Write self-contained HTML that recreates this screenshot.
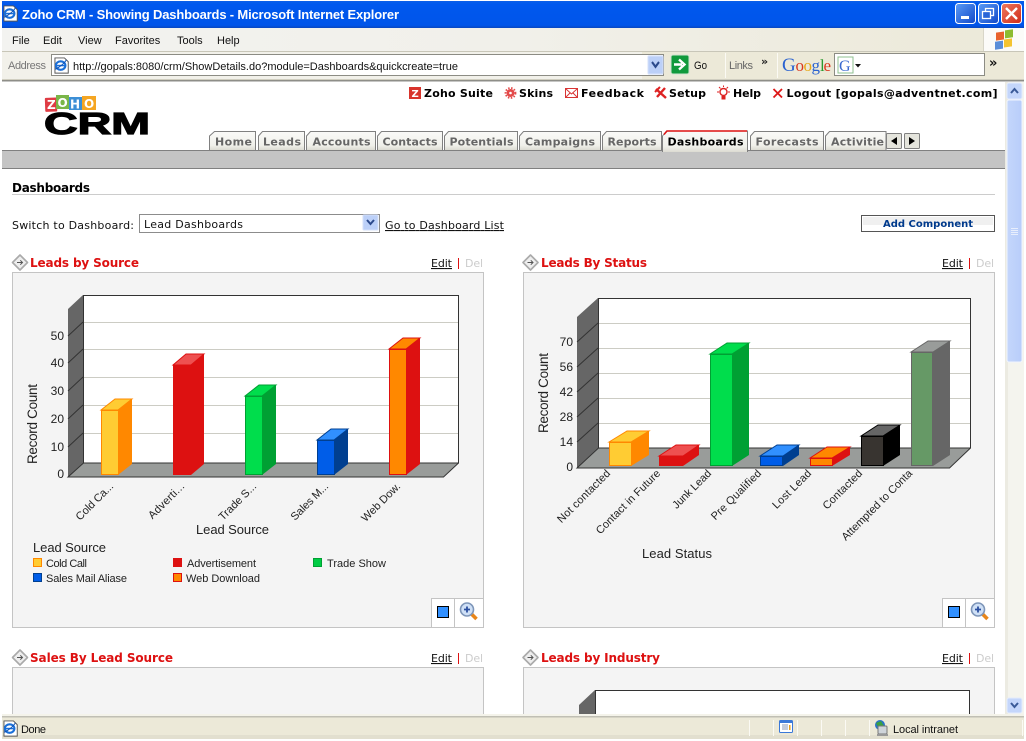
<!DOCTYPE html>
<html><head><meta charset="utf-8"><title>Zoho CRM - Showing Dashboards</title>
<style>
html,body{margin:0;padding:0;background:#fff;overflow:hidden}
svg{display:block}
text{white-space:pre}
.ui{font-family:"Liberation Sans",sans-serif;font-size:11px;fill:#111}
.v{font-family:"DejaVu Sans",sans-serif;font-size:11px;fill:#111}
.b{font-family:"DejaVu Sans",sans-serif;font-size:11px;font-weight:bold;fill:#000}
.tab{font-family:"DejaVu Sans",sans-serif;font-size:11px;font-weight:bold;fill:#666}
.hd{font-family:"DejaVu Sans",sans-serif;font-size:12px;font-weight:bold;fill:#dd1111}
.c{font-family:"Liberation Sans",sans-serif;font-size:11px;fill:#222}
.t{fill:url(#tabg);stroke:#808080;stroke-width:1}
.wall{fill:#666}.floor{fill:#999c9a}
.g{stroke:#ccccc4;stroke-width:1;fill:none}
.w{stroke:#333;stroke-width:1;fill:none}
</style></head><body>
<svg width="1026" height="741" viewBox="0 0 1026 741" xmlns="http://www.w3.org/2000/svg">
<defs>
<linearGradient id="title" x1="0" y1="0" x2="0" y2="1"><stop offset="0" stop-color="#0a5fe8"/><stop offset=".12" stop-color="#0058ee"/><stop offset=".9" stop-color="#0055ea"/><stop offset="1" stop-color="#0a48c0"/></linearGradient>
<linearGradient id="menu" x1="0" y1="0" x2="1" y2="0"><stop offset="0" stop-color="#f3f3f0"/><stop offset=".5" stop-color="#f1f0ea"/><stop offset="1" stop-color="#ece9d8"/></linearGradient>
<linearGradient id="tabg" x1="0" y1="0" x2="0" y2="1"><stop offset="0" stop-color="#fafaf8"/><stop offset=".75" stop-color="#f0f0ea"/><stop offset="1" stop-color="#dcdbd2"/></linearGradient>
<linearGradient id="btnb" x1="0" y1="0" x2="1" y2="1"><stop offset="0" stop-color="#5c9cf6"/><stop offset="1" stop-color="#1148c8"/></linearGradient>
<linearGradient id="btnr" x1="0" y1="0" x2="1" y2="1"><stop offset="0" stop-color="#ee7a60"/><stop offset="1" stop-color="#d02a18"/></linearGradient>
<linearGradient id="sb" x1="0" y1="0" x2="1" y2="0"><stop offset="0" stop-color="#c4d6fb"/><stop offset="1" stop-color="#b8cdfa"/></linearGradient>
<g id="ie"><path d="M1 1H11L15 5V17H1Z" fill="#fff" stroke="#555"/><ellipse cx="7" cy="9" rx="5" ry="4.5" fill="none" stroke="#1a6fd8" stroke-width="2.2"/><path d="M3 9H11" stroke="#1a6fd8" stroke-width="1.6"/><path d="M1 13C4 12 11 7 13 3" fill="none" stroke="#0b4fb4" stroke-width="1"/></g>
<g id="arrow"><path d="M0 0L7.5-7.5L15 0L7.5 7.5Z" fill="#eee" stroke="#aaa" stroke-width="1.6" stroke-linejoin="round"/><path d="M4.5 0H10M7.8-2.2L10 0L7.8 2.2" fill="none" stroke="#555" stroke-width="1"/></g>
<g id="mag"><path d="M4.500 4.500L9.500 9.500" stroke="#e8861a" stroke-width="3.600"/><circle cx="0" cy="0" r="6.5" fill="#cfe0f6" stroke="#7d95b8" stroke-width="1.6"/><path d="M-3 0H3M0-3V3" stroke="#2b4fa0" stroke-width="1.8"/></g>
<g id="dd"><rect x="0" y="0" width="15" height="15" rx="1" fill="#bcd0f8" stroke="#d4e0fa"/><path d="M4 5L7.500 9L11 5" fill="none" stroke="#2c4a8c" stroke-width="2"/></g>
</defs>

<rect width="1026" height="741" fill="#fff"/>

<!-- title bar -->
<rect x="2" y="1" width="1022" height="27" fill="url(#title)"/>
<use href="#ie" transform="translate(3,5) scale(.95)"/>
<text x="22" y="19" textLength="377" font-family="Liberation Sans,sans-serif" font-size="13" font-weight="bold" fill="#fff">Zoho CRM - Showing Dashboards - Microsoft Internet Explorer</text>
<rect x="955.500" y="3.500" width="20" height="20" rx="3" fill="url(#btnb)" stroke="#fff"/>
<rect x="961" y="16" width="8" height="3" fill="#fff"/>
<rect x="978.500" y="3.500" width="20" height="20" rx="3" fill="url(#btnb)" stroke="#fff"/>
<rect x="985.500" y="8.500" width="8" height="7" fill="none" stroke="#fff" stroke-width="1.300"/><rect x="982.500" y="11.500" width="8" height="7" fill="#2a66d8" stroke="#fff" stroke-width="1.300"/>
<rect x="1001.500" y="3.500" width="20" height="20" rx="3" fill="url(#btnr)" stroke="#fff"/>
<path d="M1006 8L1017 19M1017 8L1006 19" stroke="#fff" stroke-width="2.400"/>

<!-- menu bar -->
<rect x="2" y="28" width="1022" height="24" fill="url(#menu)"/>
<rect x="984" y="28" width="40" height="24" fill="#fbfbf8"/>
<rect x="983" y="28" width="1" height="24" fill="#d8d6c8"/>
<rect x="2" y="51" width="1022" height="1" fill="#c8c6b8"/>
<g class="ui"><text class="ui" x="12" y="44">File</text><text class="ui" x="43" y="44">Edit</text><text class="ui" x="78" y="44">View</text><text class="ui" x="115" y="44">Favorites</text><text class="ui" x="177" y="44">Tools</text><text class="ui" x="217" y="44">Help</text></g>
<g transform="translate(993,31) skewY(-8)"><rect x="3" y="2" width="8" height="8" fill="#e8622c"/><rect x="12" y="1" width="8" height="8" fill="#8cbc30"/><rect x="2" y="11" width="8" height="8" fill="#5a8ed8"/><rect x="11" y="10" width="8" height="8" fill="#f4c430"/></g>

<!-- address bar -->
<rect x="2" y="52" width="1022" height="27" fill="#ece9d8"/>
<rect x="2" y="52" width="640" height="27" fill="#f2f1ea"/>
<text class="ui" x="8" y="69" style="fill:#777" textLength="38">Address</text>
<rect x="51.500" y="54.500" width="612" height="21" fill="#fff" stroke="#8c8c84"/>
<use href="#ie" transform="translate(54,57) scale(.95)"/>
<text class="ui" x="73" y="70" textLength="385">http://gopals:8080/crm/ShowDetails.do?module=Dashboards&amp;quickcreate=true</text>
<use href="#dd" transform="translate(648,56) scale(1,1.2)"/>
<rect x="671" y="55" width="18" height="19" rx="2" fill="#119a3c" stroke="#cfe4cf"/>
<path d="M674 64.500H682M679 59.500L684.500 64.500L679 69.500" fill="none" stroke="#fff" stroke-width="2.400"/>
<text class="ui" x="694" y="69" textLength="13" lengthAdjust="spacingAndGlyphs">Go</text>
<rect x="725" y="53" width="1" height="25" fill="#fbfaf4"/>
<text class="ui" x="729" y="69" textLength="24" style="fill:#666">Links</text>
<text x="761" y="65" font-family="DejaVu Sans,sans-serif" font-size="11" font-weight="bold" fill="#222">»</text>
<rect x="777" y="53" width="1" height="25" fill="#fbfaf4"/>
<g font-family="Liberation Serif,serif" font-size="17"><text x="782" y="71" fill="#2a62d0" font-size="19">G</text><text x="795.500" y="71" fill="#d93a20">o</text><text x="803.500" y="71" fill="#e8a818">o</text><text x="811.500" y="71" fill="#2a62d0">g</text><text x="820" y="71" fill="#2a9a30">l</text><text x="823.500" y="71" fill="#d93a20">e</text></g>
<rect x="834.500" y="53.500" width="150" height="22" fill="#fff" stroke="#8c8c84"/>
<rect x="838" y="57" width="15" height="16" fill="#fff" stroke="#8fc08f"/>
<text x="839" y="71" font-family="Liberation Serif,serif" font-size="16" fill="#3a6ad0">G</text>
<path d="M855 64H861L858 67.500Z" fill="#111"/>
<text x="989" y="67" font-family="DejaVu Sans,sans-serif" font-size="13" font-weight="bold" fill="#111">»</text>
<rect x="2" y="79" width="1022" height="1" fill="#d0cec0"/>
<rect x="2" y="80" width="1022" height="1.500" fill="#8e8e88"/>

<!-- logo -->
<g transform="rotate(-2 70 103)"><rect x="45" y="97" width="12" height="14" rx="1" fill="#df3c44"/></g>
<rect x="56" y="95" width="13" height="14" fill="#7ab648"/>
<rect x="69" y="97" width="13" height="13" fill="#3c8fd6"/>
<rect x="82" y="96" width="14" height="14" fill="#f5a623"/>
<g font-family="DejaVu Sans,sans-serif" font-size="12" font-weight="bold" fill="#fff"><text x="47" y="109">Z</text><text x="57.500" y="107">O</text><text x="70" y="108.500">H</text><text x="84" y="108">O</text></g>
<text x="44" y="134" textLength="106" lengthAdjust="spacingAndGlyphs" font-family="Liberation Sans,sans-serif" font-size="31" font-weight="bold" fill="#000" stroke="#000" stroke-width="1.200">CRM</text>

<!-- top links -->
<rect x="409" y="87" width="12" height="12" fill="#d8342c"/><text x="411.500" y="97" font-family="DejaVu Sans,sans-serif" font-size="10" font-weight="bold" fill="#fff">Z</text>
<text class="b" x="424" y="97" textLength="69">Zoho Suite</text>
<circle cx="510.500" cy="93" r="4" fill="#e34a4a"/><circle cx="510.500" cy="93" r="5" fill="none" stroke="#e34a4a" stroke-width="1.800" stroke-dasharray="1.500 1.500"/><circle cx="510.500" cy="93" r="1.300" fill="#fff"/>
<text class="b" x="519" y="97" textLength="34">Skins</text>
<rect x="565.500" y="88.500" width="12" height="9" fill="#fff" stroke="#d83434"/><path d="M566 89L571.500 94L577 89M566 97L570 93M577 97L573 93" fill="none" stroke="#d83434"/>
<text class="b" x="581" y="97" textLength="63">Feedback</text>
<path d="M656 89L666 98M665 88L657 97" stroke="#dd2222" stroke-width="2.400"/><path d="M655 92L660 87" stroke="#dd2222" stroke-width="2"/>
<text class="b" x="669" y="97" textLength="37">Setup</text>
<circle cx="723.500" cy="92" r="3.500" fill="#fff" stroke="#dd2222" stroke-width="1.400"/><path d="M722 96.500H725V99H722ZM717 92H719M728 92H730M719 87L720.500 88.500M728 87L726.500 88.500M723.500 85.500V87" fill="#dd2222" stroke="#dd2222"/>
<text class="b" x="733" y="97" textLength="28">Help</text>
<path d="M773.500 89L782 97.500M782 89L773.500 97.500" stroke="#dd1818" stroke-width="1.800"/>
<text class="b" x="786.500" y="97" textLength="211">Logout [gopals@adventnet.com]</text>

<!-- band -->
<rect x="2" y="150" width="1003" height="1" fill="#808080"/>
<rect x="2" y="151" width="1003" height="17" fill="#c4c4c4"/>
<rect x="2" y="168" width="1003" height="1" fill="#808080"/>

<!-- tabs -->
<path class="t" d="M209.500 150V136L214.500 131.500H255.500V150"/>
<path class="t" d="M258.500 150V136L262.500 131.500H304.500V150"/>
<path class="t" d="M306.500 150V136L310.500 131.500H375.500V150"/>
<path class="t" d="M377.500 150V136L381.500 131.500H442.500V150"/>
<path class="t" d="M444.500 150V136L448.500 131.500H517.500V150"/>
<path class="t" d="M519.500 150V136L523.500 131.500H600.500V150"/>
<path class="t" d="M602.500 150V136L606.500 131.500H661.500V150"/>
<path class="t" d="M750.500 150V136L754.500 131.500H823.500V150"/>
<path class="t" d="M825.500 150V136L829.500 131.500H886V150"/>
<path d="M662.500 152V136L666.500 131H747.500V152" fill="url(#tabg)" stroke="#808080"/>
<path d="M664 134.500L667 131H747" fill="none" stroke="#dd1111" stroke-width="1.500"/>
<text class="tab" x="215" y="145.500" textLength="37">Home</text>
<text class="tab" x="263" y="145.500" textLength="38">Leads</text>
<text class="tab" x="312.500" y="145.500" textLength="58">Accounts</text>
<text class="tab" x="382.500" y="145.500" textLength="55">Contacts</text>
<text class="tab" x="449.500" y="145.500" textLength="64">Potentials</text>
<text class="tab" x="525" y="145.500" textLength="70">Campaigns</text>
<text class="tab" x="607.500" y="145.500" textLength="49">Reports</text>
<text class="b" x="667.500" y="145.500" textLength="76">Dashboards</text>
<text class="tab" x="755.500" y="145.500" textLength="63">Forecasts</text>
<text class="tab" x="831" y="145.500" textLength="53">Activitie</text>
<rect x="886.500" y="133.500" width="15" height="15" rx="1" fill="#e4e4dc" stroke="#808080"/><path d="M897 137V145L891 141Z" fill="#000"/>
<rect x="904.500" y="133.500" width="15" height="15" rx="1" fill="#e4e4dc" stroke="#808080"/><path d="M909 137V145L915 141Z" fill="#000"/>

<!-- heading -->
<text class="b" x="12" y="192" textLength="78" style="font-size:12px">Dashboards</text>
<rect x="12" y="194" width="983" height="1" fill="#ccc"/>
<text class="v" x="12" y="229" textLength="122">Switch to Dashboard:</text>
<rect x="139.500" y="214.500" width="240" height="18" fill="#fff" stroke="#8c8c8c"/>
<text class="v" x="144" y="228" textLength="99">Lead Dashboards</text>
<use href="#dd" transform="translate(363,215)"/>
<text class="v" x="385" y="229" textLength="119" text-decoration="underline">Go to Dashboard List</text>
<rect x="861.500" y="215.500" width="133" height="16" fill="#fff" stroke="#555"/>
<rect x="863" y="217" width="130" height="8" fill="#f0f0f0"/>
<text x="883" y="227" textLength="90" font-family="DejaVu Sans,sans-serif" font-size="10" font-weight="bold" fill="#003a8c">Add Component</text>

<!-- Left panel heading -->
<use href="#arrow" transform="translate(12.500,262.500)"/>
<text class="hd" x="30" y="267" textLength="109">Leads by Source</text>
<text class="v" x="431" y="267" textLength="21" text-decoration="underline">Edit</text>
<rect x="458" y="258" width="1" height="11" fill="#dd1111"/>
<text class="v" x="465" y="267" textLength="18" style="fill:#ccc">Del</text>
<rect x="12.500" y="272.500" width="471" height="355" fill="#f4f4f4" stroke="#c4c4c4"/>

<!-- chart 1 -->
<rect x="83" y="295" width="375" height="168" fill="#fff"/>
<path d="M83 295L68 309V477L83 463Z" class="wall"/>
<path d="M83 463H458L443 477H68Z" class="floor"/>
<path class="g" d="M83 322.500H458M83 349.500H458M83 377.500H458M83 405.500H458M83 433.500H458"/>
<path d="M68 336L83 322M68 363L83 349M68 391L83 377M68 419L83 405M68 447L83 433" stroke="#333" fill="none"/>
<path class="w" d="M83.500 463V295.500H458.500V463H83.500M458.500 463L443.500 477H68L83.500 463"/>
<g class="c"><text class="c" x="64" y="340" text-anchor="end" style="font-size:12px">50</text><text class="c" x="64" y="367" text-anchor="end" style="font-size:12px">40</text><text class="c" x="64" y="395" text-anchor="end" style="font-size:12px">30</text><text class="c" x="64" y="423" text-anchor="end" style="font-size:12px">20</text><text class="c" x="64" y="451" text-anchor="end" style="font-size:12px">10</text><text class="c" x="64" y="478" text-anchor="end" style="font-size:12px">0</text></g>
<text class="c" transform="translate(37,464) rotate(-90)" textLength="80" style="font-size:13.500px">Record Count</text>

<!-- bars 1 -->
<g stroke-width="1">
<path d="M118 410L132 399V464L118 475Z" fill="#ff8800"/><path d="M101 410L115 399H132L118 410Z" fill="#ffcc33" stroke="#ff8800"/><rect x="101.500" y="410.500" width="17" height="64" fill="#ffcc33" stroke="#ff8800"/>
<path d="M191 365L204 354V464L191 475Z" fill="#dd1111"/><path d="M173 365L186 354H204L191 365Z" fill="#ee5050" stroke="#dd1111"/><rect x="173.500" y="365.500" width="17" height="109" fill="#dd1111" stroke="#dd1111"/>
<path d="M262 396L276 385V464L262 475Z" fill="#00a033"/><path d="M245 396L259 385H276L262 396Z" fill="#00dd4c" stroke="#00a033"/><rect x="245.500" y="396.500" width="17" height="78" fill="#00dd4c" stroke="#00a033"/>
<path d="M334 440L348 429V464L334 475Z" fill="#003f90"/><path d="M317 440L331 429H348L334 440Z" fill="#3190ff" stroke="#003f90"/><rect x="317.500" y="440.500" width="17" height="34" fill="#005de8" stroke="#003f90"/>
<path d="M406 349L420 338V464L406 475Z" fill="#dd1111"/><path d="M389 349L403 338H420L406 349Z" fill="#ff8800" stroke="#dd1111"/><rect x="389.500" y="349.500" width="17" height="125" fill="#ff8800" stroke="#dd1111"/>
</g>
<g class="c">
<text class="c" text-anchor="end" transform="translate(114,487) rotate(-45)" textLength="48">Cold Ca...</text>
<text class="c" text-anchor="end" transform="translate(185,487) rotate(-45)" textLength="46">Adverti...</text>
<text class="c" text-anchor="end" transform="translate(257,487) rotate(-45)" textLength="48">Trade S...</text>
<text class="c" text-anchor="end" transform="translate(329,487) rotate(-45)" textLength="48">Sales M...</text>
<text class="c" text-anchor="end" transform="translate(401,487) rotate(-45)" textLength="50">Web Dow.</text>
</g>
<text class="c" x="196" y="534" textLength="73" style="font-size:13px">Lead Source</text>
<text class="c" x="33" y="552" textLength="73" style="font-size:13px">Lead Source</text>
<rect x="33.500" y="558.500" width="8" height="8" fill="#ffcc33" stroke="#ff8800"/><text class="c" x="46" y="567" textLength="41">Cold Call</text>
<rect x="173.500" y="558.500" width="8" height="8" fill="#dd1111" stroke="#dd1111"/><text class="c" x="187" y="567" textLength="69">Advertisement</text>
<rect x="313.500" y="558.500" width="8" height="8" fill="#00cc44" stroke="#00a033"/><text class="c" x="327" y="567" textLength="59">Trade Show</text>
<rect x="33.500" y="573.500" width="8" height="8" fill="#005de8" stroke="#003f90"/><text class="c" x="46" y="582" textLength="81">Sales Mail Aliase</text>
<rect x="173.500" y="573.500" width="8" height="8" fill="#ff8800" stroke="#dd1111"/><text class="c" x="186" y="582" textLength="74">Web Download</text>
<rect x="431.500" y="598.500" width="52" height="29" fill="#fff" stroke="#c4c4c4"/><rect x="454" y="598.500" width="1" height="29" fill="#c4c4c4"/>
<rect x="437.500" y="606.500" width="11" height="11" fill="#3190ff" stroke="#000"/>
<use href="#mag" transform="translate(467,609.500)"/>

<!-- Right panel heading -->
<use href="#arrow" transform="translate(523,262.500)"/>
<text class="hd" x="541" y="267" textLength="106">Leads By Status</text>
<text class="v" x="942" y="267" textLength="21" text-decoration="underline">Edit</text>
<rect x="969" y="258" width="1" height="11" fill="#dd1111"/>
<text class="v" x="976" y="267" textLength="18" style="fill:#ccc">Del</text>
<rect x="523.500" y="272.500" width="471" height="355" fill="#f4f4f4" stroke="#c4c4c4"/>

<!-- chart 2 -->
<rect x="598" y="298" width="372" height="150" fill="#fff"/>
<path d="M598 298L577 317V468L598 448Z" class="wall"/>
<path d="M598 448H970L949 468H577Z" class="floor"/>
<path class="g" d="M598 323.500H970M598 348.500H970M598 373.500H970M598 398.500H970M598 423.500H970"/>
<path d="M577 342L598 323M577 367L598 348M577 392L598 373M577 417L598 398M577 442L598 423" stroke="#333" fill="none"/>
<path class="w" d="M598.500 448V298.500H970.500V448H598.500M970.500 448L949.500 468H577L598.500 448"/>
<g class="c"><text class="c" x="573" y="346" text-anchor="end" style="font-size:12px">70</text><text class="c" x="573" y="371" text-anchor="end" style="font-size:12px">56</text><text class="c" x="573" y="396" text-anchor="end" style="font-size:12px">42</text><text class="c" x="573" y="421" text-anchor="end" style="font-size:12px">28</text><text class="c" x="573" y="446" text-anchor="end" style="font-size:12px">14</text><text class="c" x="573" y="471" text-anchor="end" style="font-size:12px">0</text></g>
<text class="c" transform="translate(548,433) rotate(-90)" textLength="80" style="font-size:13.500px">Record Count</text>

<!-- bars 2 -->
<g stroke-width="1">
<path d="M631 442L649 431V455L631 466Z" fill="#ff8800"/><path d="M609 442L627 431H649L631 442Z" fill="#ffcc33" stroke="#ff8800"/><rect x="609.500" y="442.500" width="22" height="23" fill="#ffcc33" stroke="#ff8800"/>
<path d="M683 456L699 445V455L683 466Z" fill="#dd1111"/><path d="M659 456L676 445H699L683 456Z" fill="#ee5050" stroke="#dd1111"/><rect x="659.500" y="456.500" width="23" height="9" fill="#dd1111" stroke="#dd1111"/>
<path d="M732 354L749 343V455L732 466Z" fill="#00a033"/><path d="M710 354L727 343H749L732 354Z" fill="#00dd4c" stroke="#00a033"/><rect x="710.500" y="354.500" width="22" height="111" fill="#00dd4c" stroke="#00a033"/>
<path d="M783 456L799 445V455L783 466Z" fill="#003f90"/><path d="M760 456L777 445H799L783 456Z" fill="#3190ff" stroke="#003f90"/><rect x="760.500" y="456.500" width="22" height="9" fill="#005de8" stroke="#003f90"/>
<path d="M832 458L850 447V455L832 466Z" fill="#dd1111"/><path d="M810 458L827 447H850L832 458Z" fill="#ff8800" stroke="#dd1111"/><rect x="810.500" y="458.500" width="22" height="7" fill="#ff8800" stroke="#dd1111"/>
<path d="M883 436L900 425V455L883 466Z" fill="#000"/><path d="M861 436L878 425H900L883 436Z" fill="#666" stroke="#000"/><rect x="861.500" y="436.500" width="22" height="29" fill="#383430" stroke="#000"/>
<path d="M933 352L950 341V455L933 466Z" fill="#666"/><path d="M911 352L928 341H950L933 352Z" fill="#999c9a" stroke="#666"/><rect x="911.500" y="352.500" width="21" height="113" fill="#669966" stroke="#666"/>
</g>
<g class="c">
<text class="c" text-anchor="end" transform="translate(611,474) rotate(-45)" textLength="70">Not contacted</text>
<text class="c" text-anchor="end" transform="translate(661,474) rotate(-45)" textLength="86">Contact in Future</text>
<text class="c" text-anchor="end" transform="translate(712,474) rotate(-45)" textLength="50">Junk Lead</text>
<text class="c" text-anchor="end" transform="translate(762,474) rotate(-45)" textLength="66">Pre Qualified</text>
<text class="c" text-anchor="end" transform="translate(812,474) rotate(-45)" textLength="50">Lost Lead</text>
<text class="c" text-anchor="end" transform="translate(863,474) rotate(-45)" textLength="51">Contacted</text>
<text class="c" text-anchor="end" transform="translate(913,474) rotate(-45)" textLength="95">Attempted to Conta</text>
</g>
<text class="c" x="642" y="558" textLength="70" style="font-size:13px">Lead Status</text>
<rect x="942.500" y="598.500" width="52" height="29" fill="#fff" stroke="#c4c4c4"/><rect x="965" y="598.500" width="1" height="29" fill="#c4c4c4"/>
<rect x="948.500" y="606.500" width="11" height="11" fill="#3190ff" stroke="#000"/>
<use href="#mag" transform="translate(978,609.500)"/>

<!-- lower headings -->
<use href="#arrow" transform="translate(12.500,657.500)"/>
<text class="hd" x="30" y="662" textLength="143">Sales By Lead Source</text>
<text class="v" x="431" y="662" textLength="21" text-decoration="underline">Edit</text>
<rect x="458" y="653" width="1" height="11" fill="#dd1111"/>
<text class="v" x="465" y="662" textLength="18" style="fill:#ccc">Del</text>
<rect x="12.500" y="667.500" width="471" height="60" fill="#f4f4f4" stroke="#c4c4c4"/>
<use href="#arrow" transform="translate(523,657.500)"/>
<text class="hd" x="541" y="662" textLength="119">Leads by Industry</text>
<text class="v" x="942" y="662" textLength="21" text-decoration="underline">Edit</text>
<rect x="969" y="653" width="1" height="11" fill="#dd1111"/>
<text class="v" x="976" y="662" textLength="18" style="fill:#ccc">Del</text>
<rect x="523.500" y="667.500" width="471" height="60" fill="#f4f4f4" stroke="#c4c4c4"/>
<rect x="595" y="690" width="375" height="40" fill="#fff"/>
<path d="M595 690L579 705V730H595Z" class="wall"/>
<path d="M595.500 730V690.500H969.500V730" class="w"/>

<!-- scrollbar -->
<rect x="1005" y="82" width="19" height="634" fill="#f4f4ee"/>
<rect x="1005" y="82" width="3" height="634" fill="#ecebe2"/>
<rect x="1007" y="83" width="15" height="16" rx="2" fill="#c4d6fb" stroke="#e4ecfc"/>
<path d="M1011 93L1014.500 89L1018 93" fill="none" stroke="#3a5a98" stroke-width="2"/>
<rect x="1007" y="100" width="15" height="262" rx="2" fill="url(#sb)" stroke="#f0f4fe"/>
<path d="M1011 228.500H1018M1011 230.500H1018M1011 232.500H1018M1011 234.500H1018" stroke="#e8eefc"/>
<rect x="1007" y="698" width="15" height="15" rx="2" fill="#c4d6fb" stroke="#e4ecfc"/>
<path d="M1011 703L1014.500 707L1018 703" fill="none" stroke="#3a5a98" stroke-width="2"/>

<!-- status bar -->
<rect x="2" y="714" width="1022" height="25" fill="#ece9d8"/>
<rect x="2" y="714" width="1022" height="2" fill="#f4f3ea"/>
<rect x="2" y="716" width="1022" height="1.500" fill="#c0bfb4"/>
<rect x="2" y="735" width="1022" height="4" fill="#e2dfcf"/>
<use href="#ie" transform="translate(3,720) scale(.95)"/>
<text class="ui" x="21" y="733" textLength="25">Done</text>
<g fill="#fbfaf4"><rect x="749" y="720" width="1" height="16"/><rect x="773" y="720" width="1" height="16"/><rect x="797" y="720" width="1" height="16"/><rect x="821" y="720" width="1" height="16"/><rect x="845" y="720" width="1" height="16"/><rect x="869" y="720" width="1" height="16"/><rect x="1022" y="720" width="1" height="16"/></g>
<rect x="779.500" y="720.500" width="13" height="12" rx="1" fill="#fff" stroke="#3a78d8"/><rect x="780" y="721" width="12" height="2" fill="#3a78d8"/><path d="M782 725H788M782 727H788M782 729H788" stroke="#8898b8"/><rect x="789" y="725" width="1.500" height="5" fill="#e8a020"/>
<circle cx="880" cy="725" r="5" fill="#2a72c8"/><path d="M876 723L881 721L884 726L879 729Z" fill="#3aa040"/><rect x="878" y="726" width="9" height="8" rx="1" fill="#cfd4da" stroke="#777"/><rect x="877" y="734" width="11" height="2" fill="#999"/>
<text class="ui" x="893" y="733" textLength="65">Local intranet</text>
</svg>
</body></html>
